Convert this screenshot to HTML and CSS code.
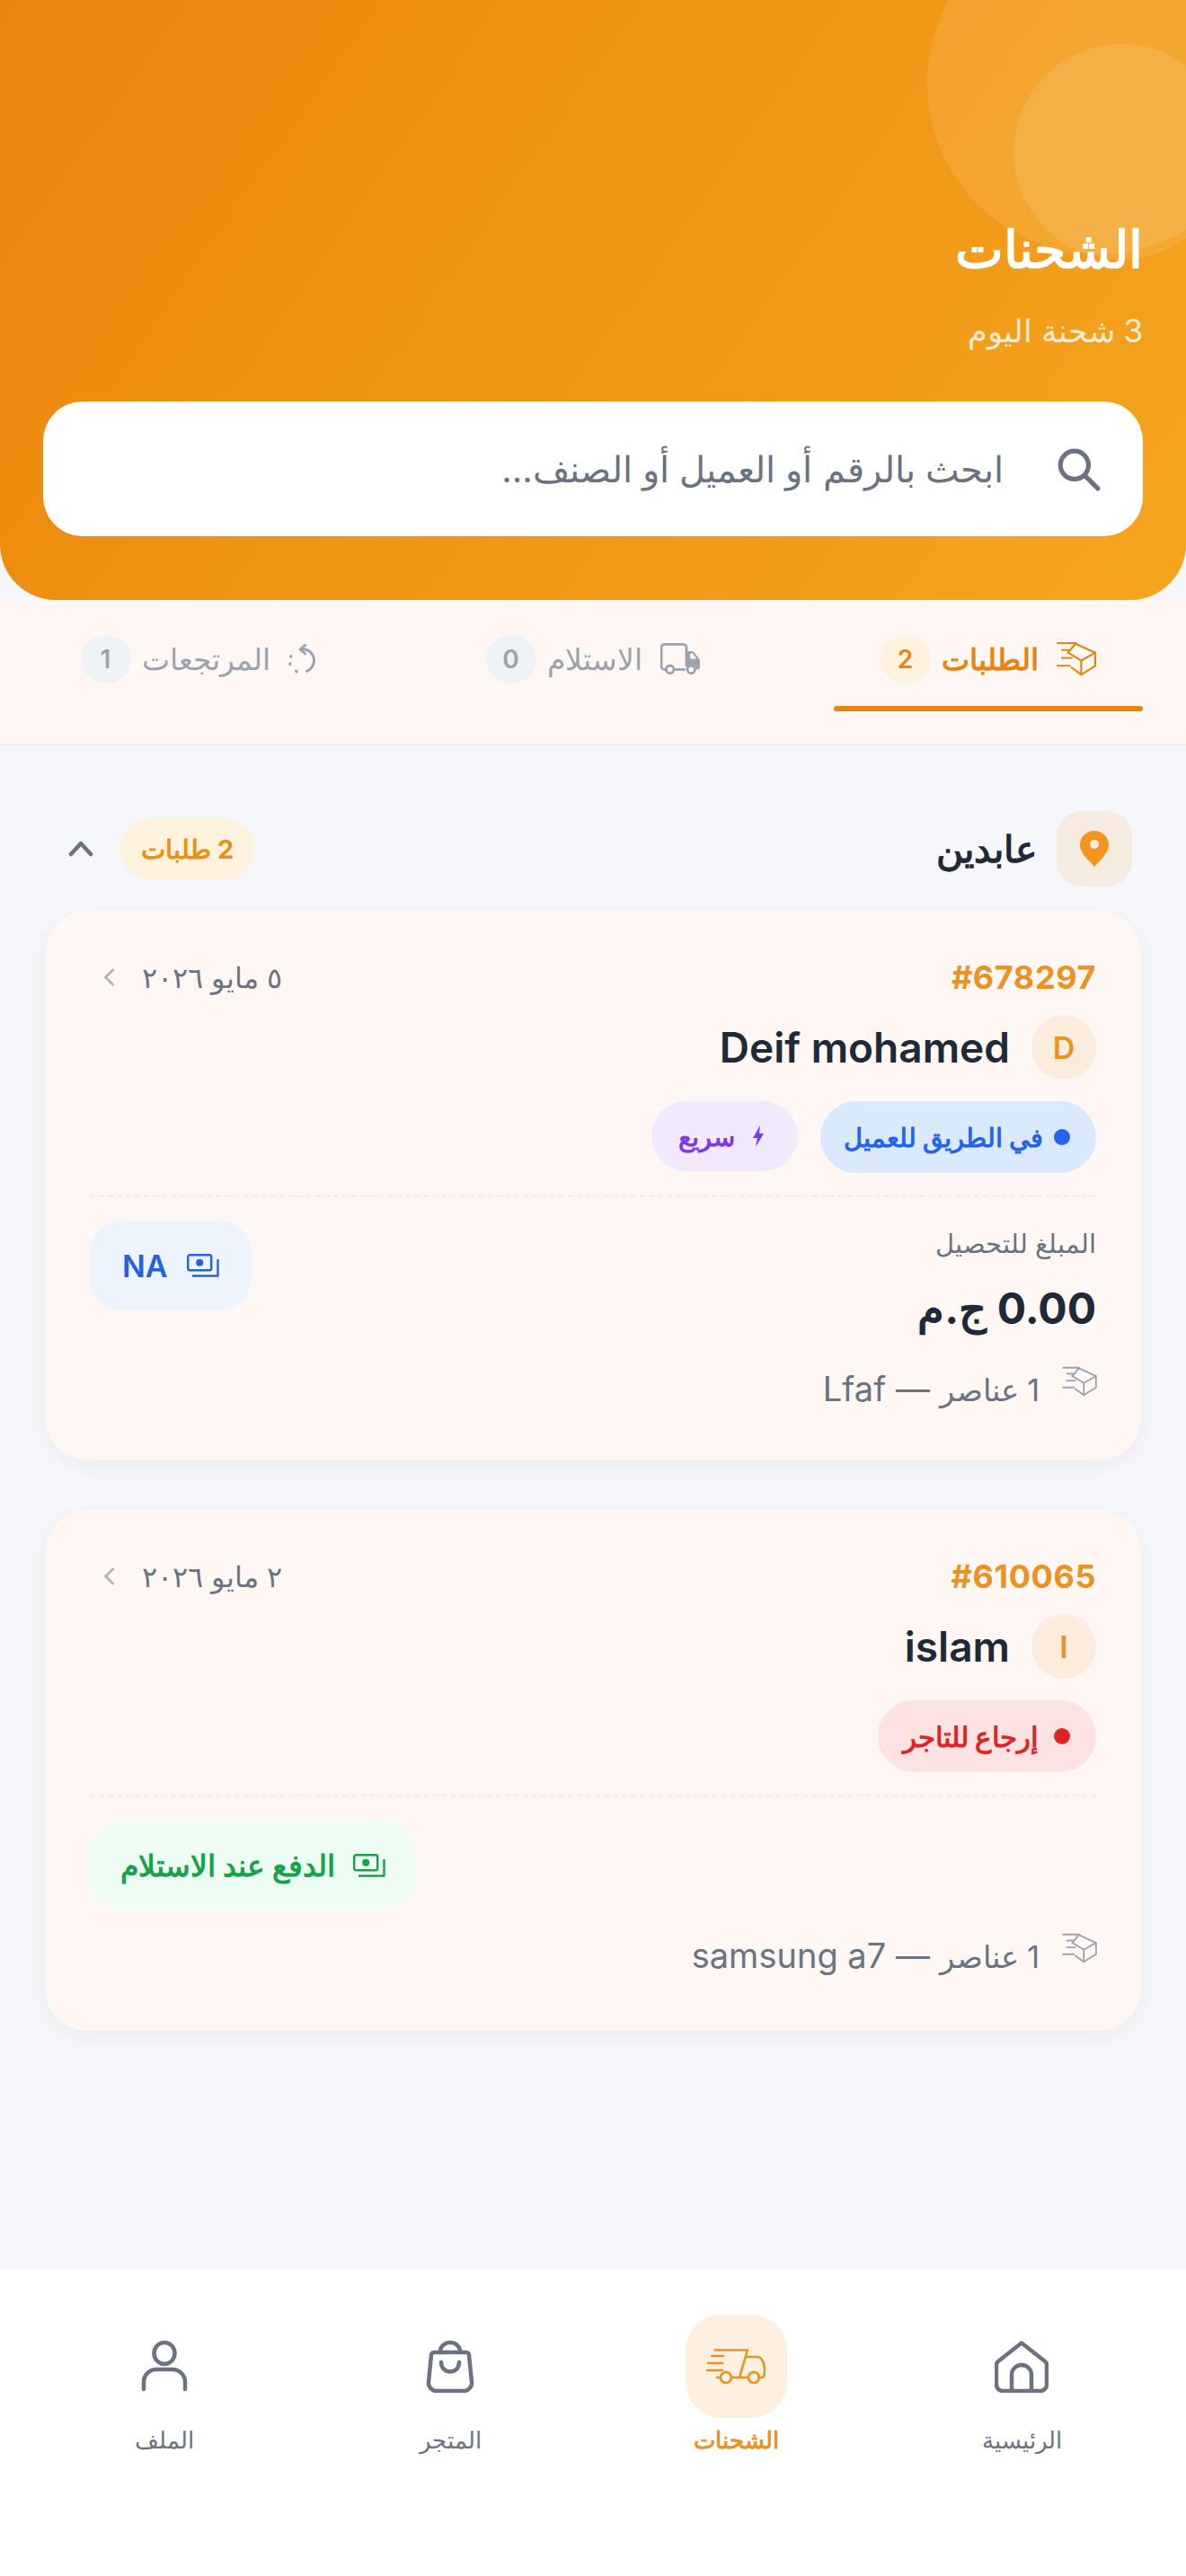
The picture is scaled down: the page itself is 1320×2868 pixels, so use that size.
FILE: index.html
```html
<!DOCTYPE html>
<html lang="ar" dir="rtl">
<head>
  <meta charset="UTF-8" />
  <meta name="viewport" content="width=device-width, initial-scale=1.0"/>
  <title>الشحنات</title>
  <link rel="stylesheet" href="styles.css">
</head>
<body>
  <svg class="sprite" width="0" height="0" aria-hidden="true">
    <symbol id="box" viewBox="0 0 46 40" fill="none" stroke="currentColor" stroke-width="2.2" stroke-linecap="round" stroke-linejoin="round">
      <path d="M20 2l24 11v15L28 38l-11-8"/><path d="M44 13l-16 9-15-9"/><path d="M28 22v16"/><path d="M13 13l9-11"/>
      <path d="M1 2h19M6 10h9M6 19h11M1 28h14"/>
    </symbol>
    <symbol id="money" viewBox="0 0 36 26" fill="none" stroke="currentColor" stroke-width="2.4" stroke-linejoin="round">
      <rect x="1.200" y="1.200" width="26" height="17" rx="2"/><circle cx="14.200" cy="9.700" r="4" fill="currentColor" stroke="none"/>
      <path d="M34.500 6v18.500H6"/>
    </symbol>
  </svg>

  <header class="hero">
    <span class="bubble bubble-lg"></span>
    <span class="bubble bubble-sm"></span>
    <h1>الشحنات</h1>
    <p class="hero-sub">3 شحنة اليوم</p>
    <div class="search">
      <svg class="search-icon" viewBox="0 0 48 48" fill="none" stroke="currentColor" stroke-width="5" stroke-linecap="round"><circle cx="20" cy="20" r="15"/><path d="M31 31l14 14"/></svg>
      <span>ابحث بالرقم أو العميل أو الصنف...</span>
    </div>
  </header>

  <nav class="tabs">
    <a class="tab active">
      <svg class="tab-icon"><use href="#box"/></svg>
      <span>الطلبات</span><b class="count">2</b>
    </a>
    <a class="tab">
      <svg class="tab-icon" viewBox="0 0 42 32" fill="none"><path d="M26 27H14M6 27H4a3 3 0 0 1-3-3V4a3 3 0 0 1 3-3h20a3 3 0 0 1 3 3v20" stroke="currentColor" stroke-width="2.6"/><path d="M27 8h6a2 2 0 0 1 1.600.800L41 17v8a2 2 0 0 1-2 2h-1H27z" fill="currentColor"/><path d="M31 10.500h2.500l4 5.500H31z" fill="#fff7f4"/><circle cx="10" cy="27" r="4" fill="#fff7f4" stroke="currentColor" stroke-width="2.600"/><circle cx="32" cy="27" r="4" fill="#fff7f4" stroke="currentColor" stroke-width="2.600"/></svg>
      <span>الاستلام</span><b class="count">0</b>
    </a>
    <a class="tab">
      <svg class="tab-icon tab-icon-return" viewBox="0 0 32 36" fill="none" stroke="currentColor" stroke-width="3.200" stroke-linecap="round"><path d="M17 6a13.500 13.500 0 0 1 5 26"/><path d="M20 1l-6 5.500 6 5" stroke-linejoin="round"/><path d="M3 14v1M2 23v1M9 32l1 1"/></svg>
      <span>المرتجعات</span><b class="count">1</b>
    </a>
  </nav>

  <main class="content">
    <div class="area-head">
      <span class="pin-tile">
        <svg viewBox="0 0 32 40"><path d="M16 0C7 0 0 7 0 15.500 0 25 10 33 16 40c6-7 16-15 16-24.500C32 7 25 0 16 0z" fill="currentColor"/><circle cx="16" cy="15" r="5" fill="#f5ebe0"/></svg>
      </span>
      <h2>عابدين</h2>
      <span class="area-count">2 طلبات</span>
      <svg class="collapse" viewBox="0 0 28 18" fill="none" stroke="currentColor" stroke-width="4.500" stroke-linecap="round" stroke-linejoin="round"><path d="M3 15L14 3l11 12"/></svg>
    </div>

    <article class="card card-first">
      <div class="card-top">
        <span class="order-no" dir="ltr">#678297</span>
        <span class="date">٥ مايو ٢٠٢٦
          <svg viewBox="0 0 14 22" fill="none" stroke="currentColor" stroke-width="3" stroke-linecap="round" stroke-linejoin="round"><path d="M11 3L3 11l8 8"/></svg>
        </span>
      </div>
      <div class="customer"><span class="avatar">D</span><span class="name" dir="ltr">Deif mohamed</span></div>
      <div class="chips">
        <span class="chip chip-blue"><i class="dot"></i>في الطريق للعميل</span>
        <span class="chip chip-purple">
          <svg viewBox="0 0 12 24"><path d="M8 0L0 14h5l-2 10 9-15H7z" fill="currentColor"/></svg>سريع
        </span>
      </div>
      <div class="pay-row">
        <div class="amount">
          <small>المبلغ للتحصيل</small>
          <strong><span dir="ltr">0.00</span> ج.م</strong>
        </div>
        <span class="pay pay-blue"><svg><use href="#money"/></svg><span>NA</span></span>
      </div>
      <div class="items"><svg><use href="#box"/></svg><span><span class="items-count">1 عناصر</span> — Lfaf</span></div>
    </article>

    <article class="card card-cod">
      <div class="card-top">
        <span class="order-no" dir="ltr">#610065</span>
        <span class="date">٢ مايو ٢٠٢٦
          <svg viewBox="0 0 14 22" fill="none" stroke="currentColor" stroke-width="3" stroke-linecap="round" stroke-linejoin="round"><path d="M11 3L3 11l8 8"/></svg>
        </span>
      </div>
      <div class="customer"><span class="avatar">I</span><span class="name" dir="ltr">islam</span></div>
      <div class="chips">
        <span class="chip chip-red"><i class="dot"></i>إرجاع للتاجر</span>
      </div>
      <div class="pay-row">
        <span></span>
        <span class="pay pay-green"><svg><use href="#money"/></svg><span>الدفع عند الاستلام</span></span>
      </div>
      <div class="items"><svg><use href="#box"/></svg><span><span class="items-count">1 عناصر</span> — samsung a7</span></div>
    </article>
  </main>

  <footer class="bottom-nav">
    <a class="nav-item">
      <span class="nav-icon"><svg viewBox="0 0 60 58" fill="none" stroke="currentColor" stroke-width="4.500" stroke-linejoin="round"><path d="M30 2.500L4 23a5 5 0 0 0-2 4v22a7 7 0 0 0 7 7h42a7 7 0 0 0 7-7V27a5 5 0 0 0-2-4z"/><path d="M19 56V38a11 11 0 0 1 22 0v18"/></svg></span>
      <span>الرئيسية</span>
    </a>
    <a class="nav-item active">
      <span class="nav-icon"><svg class="nav-truck" viewBox="0 0 66 40" fill="none" stroke="currentColor" stroke-width="2.600" stroke-linecap="round" stroke-linejoin="round"><path d="M10 1.500h36L37 32"/><path d="M45 9h12c5 0 8 8 8 15 0 4 0 8-3 8h-4"/><path d="M29 32h18"/><circle cx="22" cy="32" r="6"/><circle cx="53" cy="32" r="6"/><path d="M6 8h13M2 16h16M1 24h17M12 32h4"/></svg></span>
      <span>الشحنات</span>
    </a>
    <a class="nav-item">
      <span class="nav-icon"><svg viewBox="0 0 52 58" fill="none" stroke="currentColor" stroke-width="4.500" stroke-linecap="round" stroke-linejoin="round"><path d="M8 13h36a3 3 0 0 1 3 3l3 30a9 9 0 0 1-9 10H11a9 9 0 0 1-9-10l3-30a3 3 0 0 1 3-3z"/><path d="M15 13V12a11 10 0 0 1 22 0v1"/><path d="M16 24c0 14 20 14 20 0"/></svg></span>
      <span>المتجر</span>
    </a>
    <a class="nav-item">
      <span class="nav-icon"><svg viewBox="0 0 50 58" fill="none" stroke="currentColor" stroke-width="4.500" stroke-linecap="round"><ellipse cx="25" cy="14" rx="11.500" ry="12"/><path d="M2 54v-8a14 14 0 0 1 14-14h18a14 14 0 0 1 14 14v8"/></svg></span>
      <span>الملف</span>
    </a>
  </footer>
</body>
</html>
```

FILE: styles.css
```css
* { margin: 0; padding: 0; box-sizing: border-box; }
html, body { height: 100%; }
body { display: flex; flex-direction: column; min-height: 2868px; background: #f5f7fa; color: #1f2937; font-family: Inter, "Liberation Sans", sans-serif; }
.sprite { position: absolute; }

/* header */
.hero { position: relative; overflow: hidden; height: 668px; padding: 246px 48px 0; background: linear-gradient(125deg, #ea860c 0%, #f5a51f 100%); border-radius: 0 0 62px 62px; color: white; }
.hero h1 { position: relative; font-size: 57px; font-weight: 700; line-height: 64px; }
.hero-sub { position: relative; margin-top: 35px; font-size: 35px; line-height: 46px; opacity: .8; }
.bubble { position: absolute; border-radius: 50%; background: rgba(255,255,255,.1); }
.bubble-lg { width: 380px; height: 380px; top: -97px; left: 1032px; }
.bubble-sm { width: 240px; height: 240px; top: 49px; left: 1128px; }
.search { position: relative; display: flex; align-items: center; gap: 58px; height: 150px; margin-top: 56px; padding: 0 47px; background: white; border-radius: 44px; color: #6b7280; font-size: 40px; }
.search-icon { width: 50px; height: 50px; flex: none; }

/* tabs */
.tabs { display: grid; grid-template-columns: repeat(3, 1fr); height: 162px; background: #fff7f4; border-bottom: 2px solid #f1eeee; }
.tab { position: relative; display: flex; justify-content: center; align-items: center; gap: 20px; height: 125px; padding-top: 6px; color: #9ca3af; font-size: 33px; }
.tab-icon { width: 45px; height: 39px; flex: none; }
.tab-icon-return { width: 30px; height: 34px; }
.count { display: flex; align-items: center; justify-content: center; width: 56px; height: 54px; margin-right: -8px; border-radius: 50%; background: #eff3f6; font-family: Inter, sans-serif; font-size: 28px; font-weight: 600; }
.tab.active { color: #e5850f; font-weight: 700; }
.tab.active .count { background: #fff3e0; }
.tab.active::after { content: ""; position: absolute; bottom: 1px; left: 48px; right: 48px; height: 6px; border-radius: 3px; background: #e5850f; }

/* content */
.content { flex: 1; padding: 73px 50px 0; }
.area-head { display: flex; align-items: center; height: 84px; margin-bottom: 27px; padding: 0 10px 0 26px; }
.pin-tile { display: flex; align-items: center; justify-content: center; width: 84px; height: 84px; border-radius: 28px; background: #f5ebe0; color: #f1951d; }
.pin-tile svg { width: 32px; height: 40px; }
.area-head h2 { flex: 1; margin-right: 22px; font-size: 41px; font-weight: 700; }
.area-count { display: flex; align-items: center; height: 69px; padding: 0 24px; margin-left: 29px; border-radius: 35px; background: #fff3e0; color: #e8920f; font-size: 29px; font-weight: 700; }
.collapse { width: 28px; height: 18px; color: #6b7280; }

.card { margin-bottom: 55px; padding: 54px 50px 0; background: #fff7f4; border-radius: 48px; box-shadow: 0 6px 24px rgba(30,40,60,.05); }
.card-first { height: 612px; }
.card-cod { height: 580px; }
.card-top { display: flex; justify-content: space-between; align-items: center; height: 40px; }
.order-no { color: #ea9322; font-size: 36px; font-weight: 700; letter-spacing: .6px; }
.date { display: flex; align-items: center; gap: 29px; padding-left: 14px; color: #6b7280; font-size: 32px; }
.date svg { width: 15px; height: 22px; color: #b3b3b8; }
.customer { display: flex; align-items: center; gap: 24px; margin-top: 22px; }
.avatar { display: flex; align-items: center; justify-content: center; width: 72px; height: 72px; border-radius: 50%; background: #fcecdd; color: #ea9322; font-size: 34px; font-weight: 600; }
.name { font-size: 46px; font-weight: 600; }
.chips { display: flex; gap: 25px; margin-top: 24px; padding-bottom: 25px; border-bottom: 2px dashed #f2ecea; }
.chip { display: flex; align-items: center; gap: 17px; height: 80px; padding: 0 29px 0 28px; border-radius: 40px; font-size: 29px; font-weight: 700; }
.dot { width: 18px; height: 18px; border-radius: 50%; background: currentColor; }
.chip-blue { gap: 12px; padding-left: 26px; background: #dbe9fd; color: #2563eb; }
.chip-red { background: #fde2e2; color: #dc2626; font-size: 31px; }
.chip-purple { gap: 20px; height: 78px; padding: 0 38px 0 30px; background: #f2e9fd; color: #7c3aed; }
.chip-purple svg { width: 12px; height: 24px; }
.pay-row { display: flex; justify-content: space-between; align-items: flex-start; margin-top: 26px; }
.amount small { display: block; margin-top: 6px; color: #6b7280; font-size: 29px; line-height: 40px; }
.amount strong { display: block; margin-top: 22px; font-size: 48px; font-weight: 700; line-height: 60px; }
.pay { display: flex; align-items: center; gap: 21px; height: 100px; padding: 0 36px; border-radius: 36px; font-size: 34px; font-weight: 600; }
.pay svg { width: 36px; height: 26px; }
.pay-blue { background: #edf4fe; color: #2563dc; }
.pay-green { gap: 20px; height: 98px; padding: 0 34px; background: #eefdf3; color: #16a34a; font-size: 33px; font-weight: 700; }
.items { display: flex; align-items: center; gap: 25px; height: 40px; margin-top: 39px; color: #6b7280; font-size: 38px; }
.items-count { font-size: 34px; }
.items svg { width: 40px; height: 34px; margin-top: -16px; margin-right: -2px; color: #9ca3af; }
.card-cod .pay-row { margin-top: 28px; }
.card-cod .items { margin-top: 31px; }

/* bottom nav */
.bottom-nav { display: grid; grid-template-columns: repeat(4, 1fr); height: 342px; padding: 0 24px; background: white; }
.nav-item { display: flex; flex-direction: column; align-items: center; padding-top: 51px; color: #6b7280; font-size: 26px; }
.nav-icon { display: flex; align-items: center; justify-content: center; width: 113px; height: 115px; margin-bottom: 9px; border-radius: 40px; }
.nav-icon svg { width: 60px; height: 58px; }
.nav-item.active { color: #ea9322; font-weight: 700; }
.nav-item.active .nav-icon { background: #fdf0e1; }
.nav-icon .nav-truck { width: 66px; height: 40px; }
```
